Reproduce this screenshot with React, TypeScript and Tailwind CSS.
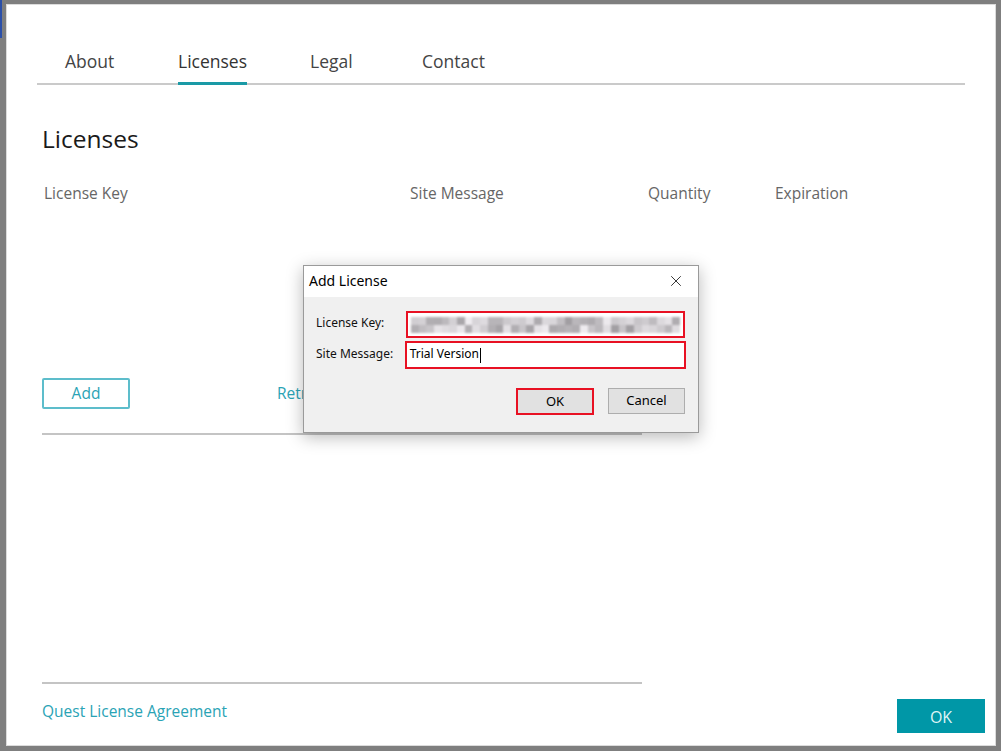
import { X } from "lucide-react";

const tabs = [
  { label: "About", width: "w-[113px]" },
  { label: "Licenses", width: "w-[132px]", active: true },
  { label: "Legal", width: "w-[112px]" },
  { label: "Contact", width: "w-[120px]" },
];

// pixelated, blurred-out license key
const keyBlocks = Array.from({ length: 70 }, (_, i) => {
  const n = Math.abs(Math.sin(i * 12.9898 + 4.1) * 43758.5453) % 1;
  const v = Math.round(160 + n * 80);
  return `rgb(${v},${v - 3},${v + 1})`;
});

function AddLicenseDialog() {
  return (
    <div className="absolute left-[303px] top-[265px] w-[396px] border border-[#9a9a9a] bg-[#f0f0f0] shadow-[0_4px_16px_rgba(0,0,0,0.28)] [font-family:'Noto_Sans','Open_Sans',sans-serif]">
      <div className="flex h-[31px] items-center justify-between bg-white pl-[5px] pr-[13px]">
        <span className="-mt-[3px] text-[14px] text-black">Add License</span>
        <X className="-mt-[2px] h-[18px] w-[18px] text-[#222]" strokeWidth={1.2} />
      </div>
      <div className="px-[12px] pb-[17px] pt-[14px]">
        <div className="flex items-center">
          <span className="-mt-[3px] w-[90px] text-[12px] text-[#111]">License Key:</span>
          <div className="flex h-[27px] w-[279px] items-center overflow-hidden border-2 border-[#e81123] bg-white px-[3px]">
            <div className="grid w-full grid-cols-[repeat(35,1fr)] blur-[0.8px]">
              {keyBlocks.map((c, i) => (
                <div key={i} className="h-[8px]" style={{ backgroundColor: c }} />
              ))}
            </div>
          </div>
        </div>
        <div className="mt-[3px] flex items-center">
          <span className="-mt-[3px] w-[89px] text-[12px] text-[#111]">Site Message:</span>
          <div className="flex h-[28px] w-[282px] items-center border-2 border-[#e81123] bg-white px-[3px]">
            <span className="-mt-[2px] text-[12px] text-black">Trial Version</span>
            <span className="ml-px h-[15px] w-px bg-black" />
          </div>
        </div>
        <div className="mt-[19px] flex justify-end gap-[14px] pr-[1px]">
          <button className="h-[27px] w-[78px] border-2 border-[#e81123] bg-[#e1e1e1] text-[13px] text-black">
            OK
          </button>
          <button className="h-[26px] w-[77px] border border-[#adadad] bg-[#e1e1e1] text-[13px] text-black">
            Cancel
          </button>
        </div>
      </div>
    </div>
  );
}

export default function App() {
  return (
    <div className="relative h-[751px] w-[1001px] bg-[#7f7f7f] pb-[5px] pl-[6px] pr-[5px] pt-[4px] [font-family:'Open_Sans','Noto_Sans',sans-serif]">
      <div className="absolute left-0 top-0 h-[38px] w-[2px] bg-[#2b4fa8]" />
      <div className="flex h-full flex-col border border-[#dcdcdc] bg-white">
        <nav className="mx-[30px] mt-[44px] flex border-b-2 border-[#cacaca] pl-[28px]">
          {tabs.map((t) => (
            <div key={t.label} className={t.width}>
              <span
                className={`-mb-[2px] inline-block border-b-[3px] pb-[9px] text-[17.5px] leading-[24px] ${
                  t.active ? "border-[#1a9aa6] text-[#333]" : "border-transparent text-[#444]"
                }`}
              >
                {t.label}
              </span>
            </div>
          ))}
        </nav>

        <div className="ml-[35px] flex flex-1 flex-col">
          <h1 className="mt-[38px] text-[24.5px] leading-[32px] text-[#1a1a1a]">Licenses</h1>

          <div className="mt-[28px] grid grid-cols-[366px_238px_127px_1fr] pl-[2px] text-[15.5px] leading-[20px] text-[#666]">
            <span>License Key</span>
            <span>Site Message</span>
            <span>Quantity</span>
            <span>Expiration</span>
          </div>

          <div className="mt-[175px] flex w-[600px] items-center">
            <button className="h-[31px] w-[88px] rounded-[2px] border-2 border-[#5dbdcb] text-[15.5px] text-[#2aa3b5]">
              Add
            </button>
            <span className="ml-[147px] text-[15.5px] text-[#2aa3b5]">Retrieve License</span>
          </div>
          <div className="mt-[24px] h-[2px] w-[600px] bg-[#c4c4c4]" />

          <div className="mt-auto flex items-end justify-between pr-[10px]">
            <div className="mb-[24px]">
              <div className="h-[2px] w-[600px] bg-[#c4c4c4]" />
              <div className="mt-[17px] text-[15.5px] leading-[20px] text-[#2aa3b5]">Quest License Agreement</div>
            </div>
            <button className="mb-[12px] h-[34px] w-[88px] bg-[#0097a7] pt-[2px] text-[16px] text-[#dff4f6]">OK</button>
          </div>
        </div>
      </div>
      <AddLicenseDialog />
    </div>
  );
}
